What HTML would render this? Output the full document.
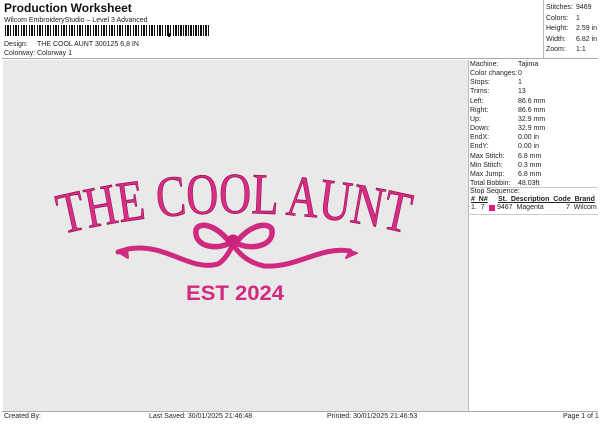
<!DOCTYPE html>
<html><head><style>
*{margin:0;padding:0;box-sizing:border-box}
body{width:600px;height:424px;background:#fff;font-family:"Liberation Sans",sans-serif;font-size:7px;color:#222;position:relative;overflow:hidden}
.a{position:absolute;white-space:nowrap}
</style></head><body>
<div class="a" style="left:4px;top:1px;font-size:12px;font-weight:bold;color:#111">Production Worksheet</div>
<div class="a" style="left:4px;top:17px">Wilcom EmbroideryStudio – Level 3 Advanced</div>
<div class="a" style="left:5px;top:25px;width:200px;height:11px;background:repeating-linear-gradient(90deg,#111 0 1px,#fff 1px 2px,#111 2px 4px,#fff 4px 5px,#111 5px 6px,#fff 6px 8px)"></div>
<div class="a" style="left:168px;top:33px;width:2px;height:4px;background:#111"></div>
<div class="a" style="left:173px;top:25px;width:36px;height:11px;background:repeating-linear-gradient(90deg,#111 0 1px,#fff 1px 2px,#111 2px 4px,#fff 4px 5px)"></div>
<div class="a" style="left:4px;top:41px">Design:</div><div class="a" style="left:37px;top:41px">THE COOL AUNT 300125 6,8 IN</div>
<div class="a" style="left:4px;top:50px">Colorway:</div><div class="a" style="left:37px;top:50px">Colorway 1</div>
<div class="a" style="left:2px;top:58px;width:596px;height:1px;background:#aaa"></div>
<div class="a" style="left:543px;top:0;width:1px;height:58px;background:#bbb"></div>
<div class="a" style="left:546px;top:3px;line-height:10.5px">Stitches:<br>Colors:<br>Height:<br>Width:<br>Zoom:</div>
<div class="a" style="left:576px;top:3px;line-height:10.5px">9469<br>1<br>2.59 in<br>6.82 in<br>1:1</div>
<div class="a" style="left:3px;top:60px;width:465px;height:351px;background:#e9e9e9"></div>
<div class="a" style="left:468px;top:60px;width:1px;height:351px;background:#bbb"></div>
<div class="a" style="left:470px;top:60px;line-height:9.15px">Machine:<br>Color changes:<br>Stops:<br>Trims:<br>Left:<br>Right:<br>Up:<br>Down:<br>EndX:<br>EndY:<br>Max Stitch:<br>Min Stitch:<br>Max Jump:<br>Total Bobbin:</div>
<div class="a" style="left:518px;top:60px;line-height:9.15px">Tajima<br>0<br>1<br>13<br>86.6 mm<br>86.6 mm<br>32.9 mm<br>32.9 mm<br>0.00 in<br>0.00 in<br>6.8 mm<br>0.3 mm<br>6.8 mm<br>48.03ft</div>
<div class="a" style="left:469px;top:187px;width:129px;height:1px;background:#ccc"></div>
<div class="a" style="left:470px;top:188px">Stop Sequence:</div>
<div class="a" style="left:471px;top:196px;font-weight:bold;text-decoration:underline">#&nbsp; N#</div>
<div class="a" style="left:498px;top:196px;font-weight:bold;text-decoration:underline">St.&nbsp; Description&nbsp; Code&nbsp; Brand</div>
<div class="a" style="left:471px;top:204px">1.&nbsp; 7</div>
<div class="a" style="left:489px;top:205px;width:6px;height:6px;background:#e0187a"></div>
<div class="a" style="left:497px;top:204px">9467&nbsp; Magenta</div>
<div class="a" style="left:566px;top:204px">7&nbsp; Wilcom</div>
<div class="a" style="left:469px;top:214px;width:129px;height:1px;background:#ccc"></div>
<div class="a" style="left:2px;top:411px;width:596px;height:1px;background:#aaa"></div>
<div class="a" style="left:4px;top:413px">Created By:</div>
<div class="a" style="left:149px;top:413px">Last Saved: 30/01/2025 21:46:48</div>
<div class="a" style="left:327px;top:413px">Printed: 30/01/2025 21:46:53</div>
<div class="a" style="left:563px;top:413px">Page 1 of 1</div>
<svg class="a" style="left:0;top:0" width="600" height="424">
<defs><path id="arc" d="M62,234 Q235,192 410,234"/></defs>
<text font-family="Liberation Serif,serif" font-size="58" fill="#d92d85" stroke="#9a1457" stroke-width="0.8"><textPath href="#arc" textLength="348" lengthAdjust="spacingAndGlyphs">THE COOL AUNT</textPath></text>
<g fill="none" stroke="#cf2a7f" stroke-linecap="round" stroke-linejoin="round">
<path d="M118,252 L128,249 C165,242 190,272 218,264 C226,259 230,250 233,245 C238,252 246,262 264,266 C298,268 320,246 350,251" stroke-width="5"/>
<path d="M118,252 L128,258 L127,249 Z" fill="#cf2a7f" stroke-width="2"/>
<path d="M350,251 L346,258 L357,253 Z" fill="#cf2a7f" stroke-width="2"/>
<path d="M228,240 C212,222 198,223 196,230 C194,246 214,250 228,244" stroke-width="5.5"/>
<path d="M238,240 C254,222 270,223 272,230 C274,246 252,250 238,244" stroke-width="5.5"/>
</g>
<circle cx="233" cy="241" r="6.5" fill="#c9237a"/>
<text x="235" y="300" text-anchor="middle" font-family="Liberation Sans,sans-serif" font-weight="bold" font-size="21" fill="#d22a80" textLength="98" lengthAdjust="spacingAndGlyphs">EST 2024</text>
</svg>
</body></html>
